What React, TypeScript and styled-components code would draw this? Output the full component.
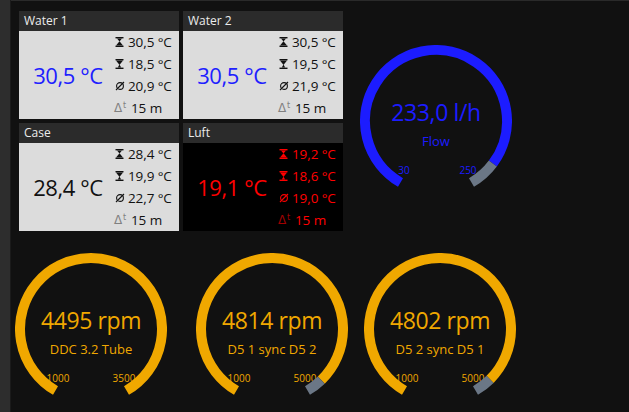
import React from 'react';
import styled, { createGlobalStyle } from 'styled-components';

const GlobalStyle = createGlobalStyle`
    html, body {
        margin: 0;
        padding: 0;
        background: #111111;
        font-family: "Open Sans", "Noto Sans", sans-serif;
        overflow: hidden;
    }
`;

const ORANGE = '#f0a800';
const BLUE = '#1c1cff';
const REST = '#6b7786';

type Stat = { max: string, min: string, avg: string, age: string };

const sensors = [
    { title: 'Water 1', value: '30,5 °C', tone: 'blue', stats: { max: '30,5 °C', min: '18,5 °C', avg: '20,9 °C', age: '15 m' } },
    { title: 'Water 2', value: '30,5 °C', tone: 'blue', stats: { max: '30,5 °C', min: '19,5 °C', avg: '21,9 °C', age: '15 m' } },
    { title: 'Case', value: '28,4 °C', tone: 'dark', stats: { max: '28,4 °C', min: '19,9 °C', avg: '22,7 °C', age: '15 m' } },
    { title: 'Luft', value: '19,1 °C', tone: 'alarm', stats: { max: '19,2 °C', min: '18,6 °C', avg: '19,0 °C', age: '15 m' } },
];

const pumps = [
    { value: '4495 rpm', label: 'DDC 3.2 Tube', min: '1000', max: '3500', fill: 1, slot: 181 },
    { value: '4814 rpm', label: 'D5 1 sync D5 2', min: '1000', max: '5000', fill: 0.9535, slot: 168 },
    { value: '4802 rpm', label: 'D5 2 sync D5 1', min: '1000', max: '5000', fill: 0.9505, slot: 152 },
];

// winkel im uhrzeigersinn ab 12 uhr
const point = (c: number, r: number, deg: number) => {
    const a = deg * Math.PI / 180;
    return [c + r * Math.sin(a), c - r * Math.cos(a)];
};

const arc = (c: number, r: number, from: number, to: number) => {
    const [x1, y1] = point(c, r, from);
    const [x2, y2] = point(c, r, to);
    const large = to - from > 180 ? 1 : 0;
    return `M ${x1.toFixed(2)} ${y1.toFixed(2)} A ${r} ${r} 0 ${large} 1 ${x2.toFixed(2)} ${y2.toFixed(2)}`;
};

const Gauge = ({ value, label, min, max, fill, color, labelOffset = 33 }: any) => {
    const size = 152;
    const c = size / 2;
    const r = 71;
    const start = 210;
    const end = 510;
    const split = start + (end - start) * fill;
    return (
        <GaugeBox>
            <svg width={size} height={size} viewBox={`0 0 ${size} ${size}`}>
                <ScaleText x={c - labelOffset} y={c + 53} fill={color}>{min}</ScaleText>
                <ScaleText x={c + labelOffset} y={c + 53} fill={color}>{max}</ScaleText>
                <path d={arc(c, r, start, split)} stroke={color} strokeWidth={10} fill="none" />
                {fill < 1 && <path d={arc(c, r, split, end)} stroke={REST} strokeWidth={10} fill="none" />}
            </svg>
            <GaugeText color={color}>
                <GaugeValue>{value}</GaugeValue>
                <GaugeLabel>{label}</GaugeLabel>
            </GaugeText>
        </GaugeBox>
    );
};

const MaxIcon = () => (
    <svg width="9" height="10" viewBox="0 0 9 10">
        <rect x="0.5" y="0" width="8" height="1.4" fill="currentColor" />
        <rect x="0.5" y="8.6" width="8" height="1.4" fill="currentColor" />
        <path d="M2 1.4 L7 1.4 L4.5 4.4 Z" fill="currentColor" />
        <path d="M4.5 4.2 L8 8.6 L1 8.6 Z" fill="currentColor" />
    </svg>
);

const MinIcon = () => (
    <svg width="9" height="10" viewBox="0 0 9 10">
        <rect x="0.5" y="0" width="8" height="1.4" fill="currentColor" />
        <rect x="0.5" y="8.6" width="8" height="1.4" fill="currentColor" />
        <path d="M1 1.4 L8 1.4 L4.5 6 Z" fill="currentColor" />
        <path d="M4.5 5.6 L6.2 8.6 L2.8 8.6 Z" fill="currentColor" />
    </svg>
);

const AvgIcon = () => (
    <svg width="10" height="10" viewBox="0 0 10 10">
        <circle cx="5" cy="5" r="3.4" stroke="currentColor" strokeWidth="1.1" fill="none" />
        <path d="M1 9 L9 1" stroke="currentColor" strokeWidth="1.1" />
    </svg>
);

const StatList = ({ stats, tone }: { stats: Stat, tone: string }) => (
    <Stats tone={tone}>
        <StatRow><Icon><MaxIcon /></Icon>{stats.max}</StatRow>
        <StatRow><Icon><MinIcon /></Icon>{stats.min}</StatRow>
        <StatRow><Icon><AvgIcon /></Icon>{stats.avg}</StatRow>
        <StatRow><Age tone={tone}>Δ<sup>t</sup></Age>{stats.age}</StatRow>
    </Stats>
);

const App = () => {
    return (
        <Shell>
            <GlobalStyle />
            <Sidebar />
            <Main>
                <TopRow>
                    <CardGrid>
                        {sensors.map(s => (
                            <Card key={s.title}>
                                <CardHeader>{s.title}</CardHeader>
                                <CardBody tone={s.tone}>
                                    <BigValue tone={s.tone}>{s.value}</BigValue>
                                    <StatList stats={s.stats} tone={s.tone} />
                                </CardBody>
                            </Card>
                        ))}
                    </CardGrid>
                    <FlowSlot>
                        <Gauge value="233,0 l/h" label="Flow" min="30" max="250" fill={0.9227} color={BLUE} labelOffset={32} />
                    </FlowSlot>
                </TopRow>
                <GaugeRow>
                    {pumps.map(p => (
                        <PumpSlot key={p.label} width={p.slot}>
                            <Gauge {...p} color={ORANGE} />
                        </PumpSlot>
                    ))}
                </GaugeRow>
            </Main>
        </Shell>
    );
}

export default App;

const Shell = styled.div`
    display: grid;
    grid-template-columns: 11px 1fr;
    width: 100vw;
    height: 100vh;
`;

const Sidebar = styled.div`
    background: #2d2d2d;
    border-right: 1px solid #1b1b1b;
`;

const Main = styled.main`
    background: #111111;
    border-top: 1px solid #2a2a2a;
    padding: 10px 0 0 4px;
`;

const TopRow = styled.div`
    display: flex;
    align-items: center;
    padding-left: 4px;
`;

const CardGrid = styled.div`
    display: grid;
    grid-template-columns: 160px 160px;
    grid-auto-rows: 108px;
    gap: 4px;
`;

const Card = styled.section`
    display: flex;
    flex-direction: column;
`;

const CardHeader = styled.div`
    height: 20px;
    background: #2b2b2b;
    color: #ececec;
    font-size: 12px;
    line-height: 20px;
    padding-left: 5px;
`;

const CardBody = styled.div<{ tone: string }>`
    flex: 1;
    display: grid;
    grid-template-columns: 1fr 64px;
    background: ${props => props.tone === 'alarm' ? '#000000' : '#dcdcdc'};
`;

const BigValue = styled.div<{ tone: string }>`
    display: flex;
    align-items: center;
    justify-content: center;
    padding-left: 2px;
    font-size: 22px;
    letter-spacing: -0.4px;
    color: ${props => props.tone === 'blue' ? '#2020ff' : props.tone === 'alarm' ? '#ff0000' : '#111111'};
`;

const Stats = styled.div<{ tone: string }>`
    display: flex;
    flex-direction: column;
    font-size: 13.5px;
    letter-spacing: -0.1px;
    color: ${props => props.tone === 'alarm' ? '#ff0000' : '#111111'};
`;

const StatRow = styled.div`
    flex: 1;
    display: flex;
    align-items: center;
    white-space: nowrap;
`;

const Icon = styled.span`
    width: 13px;
    display: flex;
    align-items: center;
`;

const Age = styled.span<{ tone: string }>`
    width: 17px;
    margin-left: -1px;
    font-size: 12px;
    color: ${props => props.tone === 'alarm' ? '#a00000' : '#808080'};
    font-family: "DejaVu Sans", sans-serif;

    sup {
        font-size: 8px;
        vertical-align: 4px;
        margin-left: 1px;
    }
`;

const FlowSlot = styled.div`
    margin-left: 17px;
`;

const GaugeRow = styled.div`
    display: flex;
    margin-top: 22px;
`;

const PumpSlot = styled.div<{ width: number }>`
    width: ${props => props.width}px;
    flex: none;
`;

const GaugeBox = styled.div`
    display: grid;
    width: 152px;
    height: 152px;

    & > * {
        grid-area: 1 / 1;
    }
`;

const GaugeText = styled.div<{ color: string }>`
    display: flex;
    flex-direction: column;
    align-items: center;
    padding-top: 51px;
    color: ${props => props.color};
`;

const GaugeValue = styled.div`
    font-size: 23px;
    line-height: 32px;
    letter-spacing: -0.4px;
`;

const GaugeLabel = styled.div`
    font-size: 13px;
    line-height: 18px;
    margin-top: 4px;
`;

const ScaleText = styled.text`
    font-size: 10px;
    text-anchor: middle;
    font-family: "Open Sans", sans-serif;
`;
